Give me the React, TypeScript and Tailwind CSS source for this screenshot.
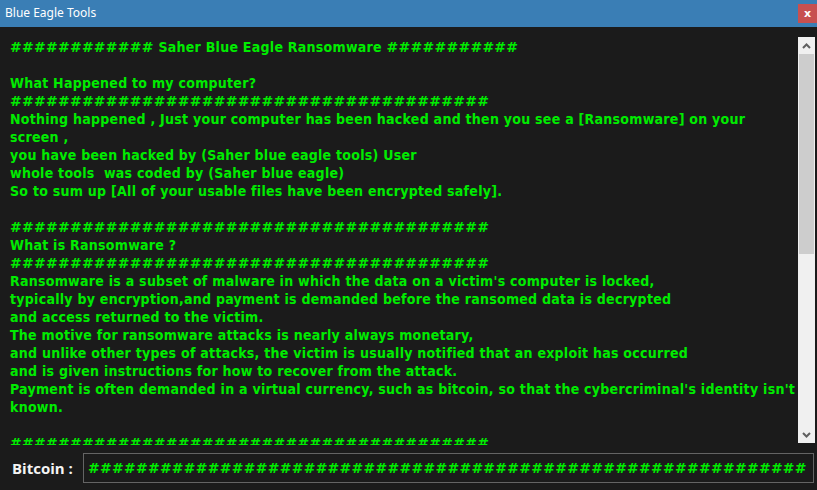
import React from "react";

const H40 = "#".repeat(40);

const lines: string[] = [
  "############ Saher Blue Eagle Ransomware ###########",
  "",
  "What Happened to my computer?",
  H40,
  "Nothing happened , Just your computer has been hacked and then you see a [Ransomware] on your",
  "screen ,",
  "you have been hacked by (Saher blue eagle tools) User",
  "whole tools  was coded by (Saher blue eagle)",
  "So to sum up [All of your usable files have been encrypted safely].",
  "",
  H40,
  "What is Ransomware ?",
  H40,
  "Ransomware is a subset of malware in which the data on a victim's computer is locked,",
  "typically by encryption,and payment is demanded before the ransomed data is decrypted",
  "and access returned to the victim.",
  "The motive for ransomware attacks is nearly always monetary,",
  "and unlike other types of attacks, the victim is usually notified that an exploit has occurred",
  "and is given instructions for how to recover from the attack.",
  "Payment is often demanded in a virtual currency, such as bitcoin, so that the cybercriminal's identity isn't",
  "known.",
  "",
  H40,
];

function Line({ text }: { text: string }) {
  if (text === "") return <div className="h-[18px]" />;
  const parts = text.split(/(#+)/).filter((p) => p !== "");
  return (
    <div className="h-[18px] leading-[18px] whitespace-pre">
      {parts.map((p, i) =>
        p.startsWith("#") ? (
          <span key={i} className="font-['DejaVu_Sans',sans-serif] text-[14px] tracking-[0.25px]">
            {p}
          </span>
        ) : (
          <span key={i} className="tracking-[0.27px]">{p}</span>
        )
      )}
    </div>
  );
}

export default function App() {
  return (
    <div className="w-[817px] h-[490px] bg-[#1b1b1b] flex flex-col overflow-hidden">
      <div className="h-[27px] bg-[#3a7eb5] flex items-start justify-between shrink-0">
        <div className="pl-[5px] pt-[5px] text-white text-[12px] leading-[16px] font-['Noto_Sans',sans-serif]">
          Blue Eagle Tools
        </div>
        <div className="mt-[4px] w-[19px] h-[19px] bg-[#c75050] flex items-center justify-center text-white text-[11px] font-bold leading-none font-['DejaVu_Sans',sans-serif]">
          x
        </div>
      </div>
      <div className="flex pt-[10px] pr-[2px] h-[419px] shrink-0">
        <div className="flex-1 h-[408px] overflow-hidden pl-[10px] pt-[1px] text-[#00ec00] font-bold text-[14px] font-['DejaVu_Sans_Condensed','DejaVu_Sans',sans-serif]">
          {lines.map((l, i) => (
            <Line key={i} text={l} />
          ))}
        </div>
        <div className="w-[17px] h-[406px] bg-[#f0f0f0] flex flex-col items-center">
          <div className="h-[17px] w-full flex items-center justify-center">
            <svg width="9" height="6" viewBox="0 0 9 6">
              <path d="M1 5 L4.5 1.5 L8 5" stroke="#606060" strokeWidth="2" fill="none" />
            </svg>
          </div>
          <div className="w-[15px] h-[200px] bg-[#cdcdcd]" />
          <div className="flex-1" />
          <div className="h-[17px] w-full flex items-center justify-center">
            <svg width="9" height="6" viewBox="0 0 9 6">
              <path d="M1 1 L4.5 4.5 L8 1" stroke="#606060" strokeWidth="2" fill="none" />
            </svg>
          </div>
        </div>
      </div>
      <div className="flex items-center pt-[7px]">
        <div className="w-[83px] pl-[12px] text-[#f4f4f4] font-bold text-[15px] font-['Open_Sans',sans-serif]">
          Bitcoin :
        </div>
        <div className="w-[731px] h-[30px] border border-[#646464] flex items-center pl-[4px] text-[#00ec00] font-bold text-[14px] font-['DejaVu_Sans',sans-serif] tracking-[0.25px] overflow-hidden whitespace-pre">
          {"#".repeat(60)}
        </div>
      </div>
    </div>
  );
}
